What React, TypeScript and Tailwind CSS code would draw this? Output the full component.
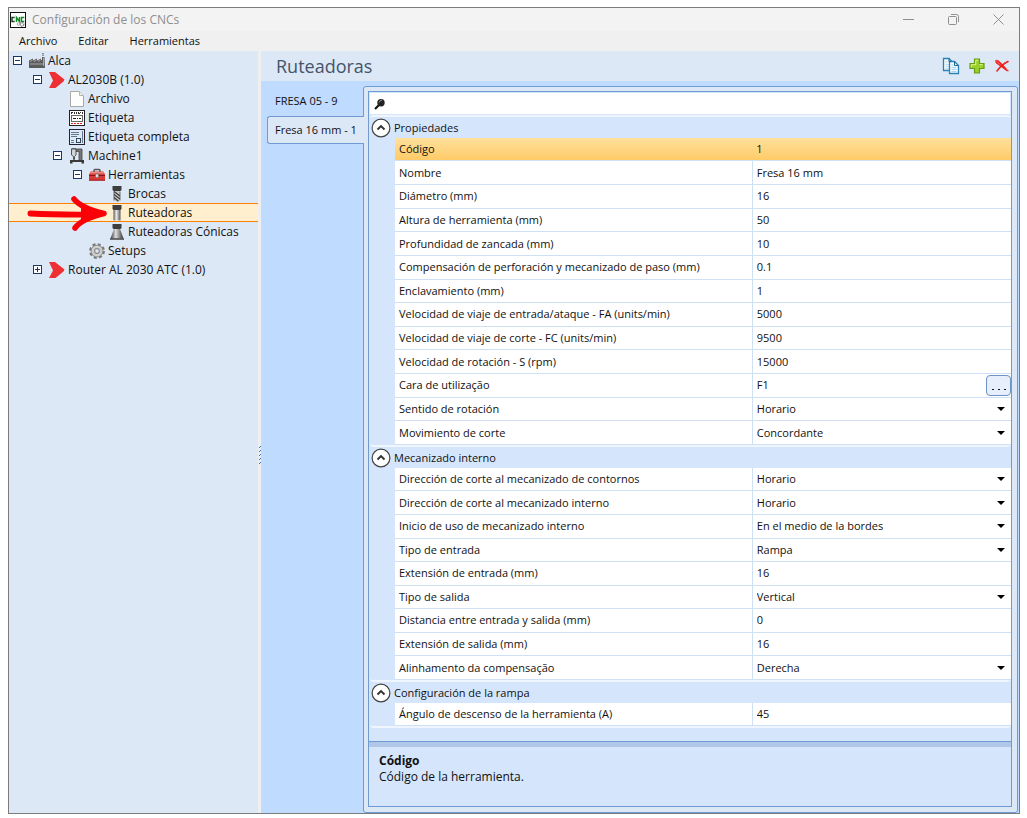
import React from 'react';

type Row = { label: string; value: string; kind?: 'select' | 'picker'; active?: boolean };
type Group = { title: string; rows: Row[]; height: string };

const groups: Group[] = [
  {
    title: 'Propiedades',
    height: 'h-[307px]',
    rows: [
      { label: 'Código', value: '1', active: true },
      { label: 'Nombre', value: 'Fresa 16 mm' },
      { label: 'Diámetro (mm)', value: '16' },
      { label: 'Altura de herramienta (mm)', value: '50' },
      { label: 'Profundidad de zancada (mm)', value: '10' },
      { label: 'Compensación de perforación y mecanizado de paso (mm)', value: '0.1' },
      { label: 'Enclavamiento (mm)', value: '1' },
      { label: 'Velocidad de viaje de entrada/ataque - FA (units/min)', value: '5000' },
      { label: 'Velocidad de viaje de corte - FC (units/min)', value: '9500' },
      { label: 'Velocidad de rotación - S (rpm)', value: '15000' },
      { label: 'Cara de utilização', value: 'F1', kind: 'picker' },
      { label: 'Sentido de rotación', value: 'Horario', kind: 'select' },
      { label: 'Movimiento de corte', value: 'Concordante', kind: 'select' },
    ],
  },
  {
    title: 'Mecanizado interno',
    height: 'h-[212px]',
    rows: [
      { label: 'Dirección de corte al mecanizado de contornos', value: 'Horario', kind: 'select' },
      { label: 'Dirección de corte al mecanizado interno', value: 'Horario', kind: 'select' },
      { label: 'Inicio de uso de mecanizado interno', value: 'En el medio de la bordes', kind: 'select' },
      { label: 'Tipo de entrada', value: 'Rampa', kind: 'select' },
      { label: 'Extensión de entrada (mm)', value: '16' },
      { label: 'Tipo de salida', value: 'Vertical', kind: 'select' },
      { label: 'Distancia entre entrada y salida (mm)', value: '0' },
      { label: 'Extensión de salida (mm)', value: '16' },
      { label: 'Alinhamento da compensação', value: 'Derecha', kind: 'select' },
    ],
  },
  {
    title: 'Configuración de la rampa',
    height: 'h-[23px]',
    rows: [{ label: 'Ángulo de descenso de la herramienta (A)', value: '45' }],
  },
];

const AppIcon = () => (
  <svg width="16" height="16" viewBox="0 0 16 16" aria-hidden="true">
    <rect x=".5" y=".5" width="15" height="15" fill="#fff" stroke="#111" />
    <path d="M4.700 5.500H2v4h2.700" fill="none" stroke="#174a1c" strokeWidth="1.500" />
    <path d="M6.500 10V5.500l3 4V5" fill="none" stroke="#128a24" strokeWidth="1.500" />
    <path d="M14.300 5.500h-2.800v4h2.800" fill="none" stroke="#128a24" strokeWidth="1.500" />
    <circle cx="12" cy="12.300" r="1.800" fill="none" stroke="#8a8a8a" strokeWidth="1.500" strokeDasharray="1.400 .5" />
    <circle cx="8.500" cy="12" r="1.300" fill="none" stroke="#a5a5a5" />
  </svg>
);

const Factory = () => (
  <svg width="16" height="16" viewBox="0 0 16 16" aria-hidden="true">
    <path d="M0 15V7.500l4-2v2l4-2v2l4-2V7h1V4h2.500L16 15z" fill="#5c5c5c" />
    <path d="M1 8.500l2.500-1.300M5 8.500l2.500-1.300M9 8.500l2.500-1.300M1 11h13M14.500 4.500V13" fill="none" stroke="#a8a8a8" />
    <path d="M14 0v3.500" stroke="#777" strokeWidth="1.500" strokeDasharray="1.200 .6" />
  </svg>
);

const Chevron = () => (
  <svg width="16" height="16" viewBox="0 0 16 16" aria-hidden="true">
    <path d="M0 0h6l9.500 7.500-1 2L6.500 16H0l4-7.500z" fill="#ee3035" />
  </svg>
);

const Page = () => (
  <svg width="16" height="16" viewBox="0 0 16 16" aria-hidden="true">
    <path d="M1.500.5h9l4 4v11h-13z" fill="#fdfdfd" stroke="#a8a8a8" />
    <path d="M10.500.5v4h4" fill="#eee" stroke="#b5b5b5" />
  </svg>
);

const Tag = () => (
  <svg width="16" height="16" viewBox="0 0 16 16" shapeRendering="crispEdges" aria-hidden="true">
    <rect x=".5" y=".5" width="15" height="15" fill="#fff" stroke="#222" />
    <path d="M2 2.500h2M5 2.500h1M7 2.500h1M9 2.500h1M11 2.500h1M13 2.500h1M2 3.500h1M5 3.500h1M7 3.500h1M9 3.500h2M13 3.500h1" stroke="#333" />
    <rect x="2.500" y="5.500" width="11" height="6" fill="none" stroke="#666" />
    <path d="M4 8.500h3M8 8.500h1M10 8.500h2" stroke="#222" />
    <path d="M2 13.500h12" stroke="#e22" strokeDasharray="2 1" />
  </svg>
);

const FullTag = () => (
  <svg width="16" height="16" viewBox="0 0 16 16" shapeRendering="crispEdges" aria-hidden="true">
    <rect x=".5" y=".5" width="15" height="15" fill="#dce9f8" stroke="#223" />
    <path d="M2 3.500h8M2 5.500h8M2 7.500h6M2 11.500h3M2 13.500h3M13.500 2v12" stroke="#678" />
    <rect x="7.500" y="9.500" width="4" height="4" fill="none" stroke="#345" />
  </svg>
);

const Machine = () => (
  <svg width="16" height="16" viewBox="0 0 16 16" aria-hidden="true">
    <path d="M2.500 1h10.500v11.500h-3V3.500H7V1z" fill="#777" stroke="#444" strokeWidth=".8" />
    <path d="M2.500 1h4.500v6L5.500 8.500v3h-1v-3L2.500 7z" fill="#d5d5d5" stroke="#444" strokeWidth=".9" />
    <path d="M1 12h14v3.500h-2.500V14h-9v1.500H1z" fill="#3a3a3a" />
  </svg>
);

const Toolbox = () => (
  <svg width="16" height="16" viewBox="0 0 16 16" aria-hidden="true">
    <path d="M5 5V3.500q0-1 1-1h4q1 0 1 1V5" fill="none" stroke="#555" strokeWidth="1.500" />
    <path d="M1.500 4.500h13L16 7.500v6H0v-6z" fill="#d83a38" />
    <path d="M1.500 5h13l.7 1.500H.8z" fill="#f08a80" />
    <path d="M0 8.500h16" stroke="#8e1515" />
    <path d="M0 13.200h16" stroke="#a51d1d" />
    <rect x="6.500" y="7" width="3" height="3.500" fill="#ddd" stroke="#666" strokeWidth=".6" />
  </svg>
);

const Drill = () => (
  <svg width="16" height="16" viewBox="1 0 16 16" aria-hidden="true">
    <path d="M4.500 0h9v4l-1 1h-7l-1-1z" fill="#3d3d3d" />
    <path d="M6 5h6v9l-3 2-3-2z" fill="#c4c4c4" />
    <path d="M6 5.500v9M12 5.500v9" stroke="#555" strokeWidth=".8" />
    <path d="M6 5.500l6 4.500M6 8.500l6 4.500M6 11.500l4.500 3.800" stroke="#3d3d3d" strokeWidth="1.200" />
  </svg>
);

const Router = () => (
  <svg width="16" height="16" viewBox="1 0 16 16" aria-hidden="true">
    <defs>
      <linearGradient id="steel">
        <stop stopColor="#555" />
        <stop offset=".4" stopColor="#eee" />
        <stop offset="1" stopColor="#555" />
      </linearGradient>
    </defs>
    <path d="M4.500 0h9v4l-1 1h-7l-1-1z" fill="#3d3d3d" />
    <path d="M5.500 5h7v10.500h-7z" fill="url(#steel)" />
  </svg>
);

const Conical = () => (
  <svg width="16" height="16" viewBox="1 0 16 16" aria-hidden="true">
    <defs>
      <linearGradient id="cone">
        <stop stopColor="#333" />
        <stop offset=".4" stopColor="#ddd" />
        <stop offset="1" stopColor="#333" />
      </linearGradient>
    </defs>
    <path d="M6 5h6l3.500 9.500h-13z" fill="url(#cone)" />
    <path d="M4.500 0h9v4l-1 1h-7l-1-1z" fill="#3d3d3d" />
    <path d="M2 15h14" stroke="#444" strokeWidth="1.500" />
  </svg>
);

const Gear = () => (
  <svg width="16" height="16" viewBox="0 0 16 16" aria-hidden="true">
    <circle cx="8" cy="8" r="6.500" fill="none" stroke="#7a7a7a" strokeWidth="2.800" strokeDasharray="2.900 2.200" />
    <circle cx="8" cy="8" r="4.300" fill="none" stroke="#858585" strokeWidth="4" />
    <circle cx="8" cy="8" r="4.200" fill="none" stroke="#cfcfcf" strokeWidth="2.600" />
    <circle cx="8" cy="8" r="2.200" fill="#dde8f6" stroke="#858585" strokeWidth=".8" />
  </svg>
);

const CopyIcon = () => (
  <svg width="18" height="18" viewBox="0 0 18 18" aria-hidden="true">
    <path d="M1.500 1.500h5.500l3 3v9h-8.500z" fill="#f2fafe" stroke="#2a82b5" strokeWidth="1.300" />
    <path d="M3.500 5h3M3.500 7.500h5M3.500 9.500h5M3.500 11.500h5" stroke="#b9dcee" />
    <path d="M7.500 4.500h5l4 4v8h-9z" fill="#f2fafe" stroke="#2a82b5" strokeWidth="1.300" />
    <path d="M12.500 4.500v4h4M7 1.500v3h2" fill="none" stroke="#1d668f" />
    <path d="M9.500 8h2M9.500 10.500h5M9.500 12.500h5M9.500 14.500h5" stroke="#a9d3e8" />
  </svg>
);

const PlusIcon = () => (
  <svg width="16" height="16" viewBox="0 0 16 16" aria-hidden="true">
    <path d="M5.500 1h5v4.500H15v5h-4.500V15h-5v-4.500H1v-5h4.500z" fill="#9bd02c" stroke="#669f12" strokeWidth="1.200" />
    <path d="M6.700 6.700V2.300h2.600M2.300 9V6.700h4.400M10.500 6.700h3.200" fill="none" stroke="#d8f28a" />
  </svg>
);

const DeleteIcon = () => (
  <svg width="16" height="14" viewBox="0 0 16 14" aria-hidden="true">
    <path d="M1.500 1.500q1.500-.8 3 .3 3.500 2.700 8.500 8.700l1.500 1.500-2-.3Q7 7.500 2 4z" fill="#f0201c" stroke="#f0201c" strokeWidth=".6" strokeLinejoin="round" />
    <path d="M3 12q4.500-6.500 11-9.500" fill="none" stroke="#f0201c" strokeWidth="1.600" strokeLinecap="round" />
    <path d="M2.500 2.500l4 3" stroke="#f98580" strokeWidth=".8" />
  </svg>
);

const SearchIcon = () => (
  <svg width="12" height="12" viewBox="0 0 12 12" aria-hidden="true">
    <path d="M1 11l4.500-4.500" stroke="#111" strokeWidth="2.200" />
    <circle cx="7" cy="4.700" r="3.700" fill="#222" />
    <path d="M5 4.500q1-2.500 3-2.300" stroke="#999" fill="none" />
  </svg>
);

const Collapse = () => (
  <svg className="block" width="20" height="20" viewBox="0 0 20 20" aria-hidden="true">
    <circle cx="10" cy="10" r="8.900" fill="#fff" stroke="#444" strokeWidth="1.200" />
    <path d="M6.500 11.500L10 8l3.500 3.500" fill="none" stroke="#333" strokeWidth="1.900" />
  </svg>
);

const Arrow = () => (
  <svg className="pointer-events-none absolute left-[18px] -top-2" width="80" height="36" viewBox="0 0 80 36" aria-hidden="true">
    <path d="M3.500 17.500Q30 19 71 18.500" fill="none" stroke="#fb0007" strokeWidth="6" strokeLinecap="round" />
    <path d="M47 3q7 9 30 14.500q-22 5-29 14.500" fill="none" stroke="#fb0007" strokeWidth="5.500" strokeLinecap="round" strokeLinejoin="round" />
    <path d="M54 12l23 5.500L54 26z" fill="#fb0007" />
  </svg>
);

const Toggle = ({ open, name }: { open: boolean; name: string }) => (
  <button type="button" aria-label={name} aria-expanded={open} className="mr-[7px] block h-[9px] w-[9px] shrink-0">
    <svg className="block" width="9" height="9" viewBox="0 0 9 9" shapeRendering="crispEdges" aria-hidden="true">
      <rect x=".5" y=".5" width="8" height="8" fill="#fff" stroke="#1d3765" />
      <path d={open ? 'M2 4.500h5' : 'M2 4.500h5M4.500 2v5'} stroke="#1d3765" />
    </svg>
  </button>
);

type Node = { label: string; icon: () => React.ReactElement; pad: string; open?: boolean; selected?: boolean };

const nodes: Node[] = [
  { label: 'Alca', icon: Factory, pad: 'pl-1', open: true },
  { label: 'AL2030B (1.0)', icon: Chevron, pad: 'pl-6', open: true },
  { label: 'Archivo', icon: Page, pad: 'pl-[60px]' },
  { label: 'Etiqueta', icon: Tag, pad: 'pl-[60px]' },
  { label: 'Etiqueta completa', icon: FullTag, pad: 'pl-[60px]' },
  { label: 'Machine1', icon: Machine, pad: 'pl-11', open: true },
  { label: 'Herramientas', icon: Toolbox, pad: 'pl-16', open: true },
  { label: 'Brocas', icon: Drill, pad: 'pl-[100px]' },
  { label: 'Ruteadoras', icon: Router, pad: 'pl-[100px]', selected: true },
  { label: 'Ruteadoras Cónicas', icon: Conical, pad: 'pl-[100px]' },
  { label: 'Setups', icon: Gear, pad: 'pl-20' },
  { label: 'Router AL 2030 ATC (1.0)', icon: Chevron, pad: 'pl-6', open: false },
];

function Tree() {
  return (
    <nav aria-label="CNCs" className="w-[249px] shrink-0 bg-[#dde8f6]">
      <ul>
        {nodes.map((n) => (
          <li
            key={n.label}
            className={`relative flex h-[19px] items-center text-xs whitespace-nowrap ${n.pad} ${n.selected ? 'border-y border-[#ff8000] bg-[#ffefcf]' : ''}`}
          >
            {n.open !== undefined && <Toggle open={n.open} name={n.label} />}
            <n.icon />
            <a href="#" className="ml-[3px]">{n.label}</a>
            {n.selected && <Arrow />}
          </li>
        ))}
      </ul>
    </nav>
  );
}

function ValueCell({ row, id }: { row: Row; id: string }) {
  if (row.kind === 'select') {
    return (
      <div className="relative">
        <select id={id} className="block w-full appearance-none bg-transparent pl-1 leading-4 outline-none">
          <option>{row.value}</option>
        </select>
        <svg className="pointer-events-none absolute top-1.5 right-1.5" width="8" height="4" viewBox="0 0 8 4" aria-hidden="true">
          <path d="M0 0h8L4 4z" fill="#000" />
        </svg>
      </div>
    );
  }
  return (
    <div className="flex items-center">
      <input id={id} defaultValue={row.value} className="block h-4 w-full min-w-0 bg-transparent pl-1 outline-none" />
      {row.kind === 'picker' && (
        <button type="button" aria-label={row.label} className="-my-1 flex h-[21px] w-[25px] shrink-0 items-center justify-center gap-1 rounded-[4px] border border-[#6f93c4] bg-[#e6effb] pt-2">
          <span className="h-px w-0.5 bg-[#112]" />
          <span className="h-px w-0.5 bg-[#112]" />
          <span className="h-px w-0.5 bg-[#112]" />
        </button>
      )}
    </div>
  );
}

function PropertyGroup({ group, index }: { group: Group; index: number }) {
  return (
    <section className="rounded border-b-2 border-[#eff6ff] pl-[25px]">
      <h2 className="-ml-[25px] flex h-[21px] items-center gap-[3px] pl-px">
        <button type="button" aria-label={group.title}><Collapse /></button>
        {group.title}
      </h2>
      <table className={`w-full table-fixed border-collapse bg-white ${group.height}`}>
        <colgroup>
          <col className="w-[58%]" />
          <col />
        </colgroup>
        <tbody>
          {group.rows.map((row, i) => {
            const id = `p-${index}-${i}`;
            return (
              <tr key={id} className={`border-b border-[#cfdff4] ${row.active ? 'bg-linear-to-b from-[#ffe09b] to-[#ffcb66]' : ''}`}>
                <th scope="row" className="p-0 pl-1 text-left font-normal whitespace-nowrap">
                  <label htmlFor={id}>{row.label}</label>
                </th>
                <td className={`p-0 ${row.active ? '' : 'border-l border-[#cfdff4]'}`}>
                  <ValueCell row={row} id={id} />
                </td>
              </tr>
            );
          })}
        </tbody>
      </table>
    </section>
  );
}

export default function App() {
  return (
    <div className="h-screen min-h-[700px] bg-white pt-[7px] pr-[7px] pb-1 pl-2 font-['Open_Sans','Noto_Sans',sans-serif] text-[11px] leading-4 text-[#111]">
      <div className="flex h-full flex-col border border-[#7c7c7c] bg-[#f0f0f0]">
        <header className="flex h-[23px] shrink-0 items-center bg-[#f3f3f3] pl-px text-xs text-[#8f8f8f]">
          <AppIcon />
          <h1 className="ml-1.5 flex-1">Configuración de los CNCs</h1>
          <div className="flex items-center gap-[34px] pr-[15px]">
            <button type="button" aria-label="Minimizar">
              <svg width="11" height="11" viewBox="0 0 11 11"><path d="M0 5.500h11" stroke="#8f8f8f" /></svg>
            </button>
            <button type="button" aria-label="Restaurar">
              <svg width="11" height="11" viewBox="0 0 11 11" fill="none" stroke="#8f8f8f">
                <rect x=".5" y="2.500" width="8" height="8" rx="1" />
                <path d="M3 .5h5.500q2 0 2 2V8" />
              </svg>
            </button>
            <button type="button" aria-label="Cerrar">
              <svg width="11" height="11" viewBox="0 0 11 11"><path d="M.5.5l10 10M10.500.5l-10 10" stroke="#8f8f8f" /></svg>
            </button>
          </div>
        </header>
        <div role="menubar" className="flex h-5 shrink-0 items-center gap-[21px] pl-2.5">
          <button type="button" role="menuitem">Archivo</button>
          <button type="button" role="menuitem">Editar</button>
          <button type="button" role="menuitem">Herramientas</button>
        </div>
        <div className="flex min-h-0 flex-1">
          <Tree />
          <div className="flex w-[3px] shrink-0 flex-col justify-center bg-[#efefef] pt-[46px]">
            <svg width="3" height="18" viewBox="0 0 3 18" shapeRendering="crispEdges" aria-hidden="true">
              <path d="M1 1h1v1h-1zM1 5h1v1h-1zM1 9h1v1h-1zM1 13h1v1h-1zM1 17h1v1h-1zM2 0h1v1h-1zM2 4h1v1h-1zM2 8h1v1h-1zM2 12h1v1h-1zM2 16h1v1h-1z" fill="#2f74d0" />
            </svg>
          </div>
          <main className="flex min-w-0 flex-1 flex-col bg-[#bfdbff]">
            <div className="flex h-[30px] shrink-0 items-center bg-[#dde8f6] pr-[9px] pl-[15px]">
              <h2 className="flex-1 text-lg text-[#44546a]">Ruteadoras</h2>
              <div className="flex items-center gap-[9px]">
                <button type="button" aria-label="Copiar"><CopyIcon /></button>
                <button type="button" aria-label="Agregar"><PlusIcon /></button>
                <button type="button" aria-label="Eliminar"><DeleteIcon /></button>
              </div>
            </div>
            <div className="flex min-h-0 flex-1 pt-[5px] pr-px">
              <div role="tablist" className="z-10 -mr-px flex w-[103px] shrink-0 flex-col pl-1.5">
                <button type="button" role="tab" aria-selected="false" className="h-[30px] pl-2 text-left">FRESA 05 - 9</button>
                <button type="button" role="tab" aria-selected="true" className="h-7 rounded-l-[3px] border border-r-0 border-[#6f9ad3] bg-[#dde8f6] pl-[7px] text-left whitespace-nowrap">Fresa 16 mm - 1</button>
              </div>
              <div role="tabpanel" className="min-w-0 flex-1 rounded-[3px] border border-[#6f9ad3] bg-[#dde8f6] p-1 pr-[5px] pb-[5px]">
                <div className="flex h-full flex-col border border-[#6f9ad3] bg-[#d5e6fc]">
                  <div className="py-px pl-px">
                    <div className="mr-px flex h-[21px] items-center bg-white pl-1">
                      <label htmlFor="search" aria-label="Buscar"><SearchIcon /></label>
                      <input id="search" className="ml-1 h-4 flex-1 bg-transparent outline-none" />
                    </div>
                    <div className="mt-px rounded border-t-2 border-[#eff6ff]">
                      {groups.map((g, i) => (
                        <PropertyGroup key={g.title} group={g} index={i} />
                      ))}
                    </div>
                  </div>
                  <div className="min-h-3 flex-1" />
                  <div className="h-1.5 shrink-0 border-t border-[#6f9ad3] bg-[#b0c7e8]" />
                  <section className="h-[60px] shrink-0 px-2.5 pt-1.5 text-xs">
                    <h3 className="leading-4 font-bold">Código</h3>
                    <p className="leading-4">Código de la herramienta.</p>
                  </section>
                </div>
              </div>
            </div>
          </main>
        </div>
      </div>
    </div>
  );
}
